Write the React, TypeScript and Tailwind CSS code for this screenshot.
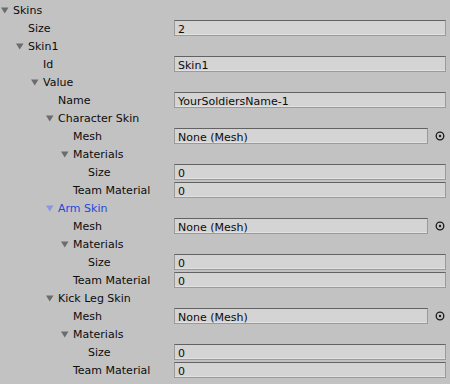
import React from "react";

type Row = {
  label: string;
  level: number;
  fold?: boolean;
  value?: string;
  obj?: boolean;
  blue?: boolean;
};

const rows: Row[] = [
  { label: "Skins", level: 0, fold: true },
  { label: "Size", level: 1, value: "2" },
  { label: "Skin1", level: 1, fold: true },
  { label: "Id", level: 2, value: "Skin1" },
  { label: "Value", level: 2, fold: true },
  { label: "Name", level: 3, value: "YourSoldiersName-1" },
  { label: "Character Skin", level: 3, fold: true },
  { label: "Mesh", level: 4, value: "None (Mesh)", obj: true },
  { label: "Materials", level: 4, fold: true },
  { label: "Size", level: 5, value: "0" },
  { label: "Team Material", level: 4, value: "0" },
  { label: "Arm Skin", level: 3, fold: true, blue: true },
  { label: "Mesh", level: 4, value: "None (Mesh)", obj: true },
  { label: "Materials", level: 4, fold: true },
  { label: "Size", level: 5, value: "0" },
  { label: "Team Material", level: 4, value: "0" },
  { label: "Kick Leg Skin", level: 3, fold: true },
  { label: "Mesh", level: 4, value: "None (Mesh)", obj: true },
  { label: "Materials", level: 4, fold: true },
  { label: "Size", level: 5, value: "0" },
  { label: "Team Material", level: 4, value: "0" },
  { label: "Enabled", level: 1, fold: true },
];

const indent = ["pl-[1px]", "pl-[16px]", "pl-[31px]", "pl-[46px]", "pl-[61px]", "pl-[76px]"];

const Triangle = ({ blue }: { blue?: boolean }) => (
  <svg width="8" height="7" viewBox="0 0 8 7" className="block">
    <path d="M0 0.5 H7.5 L3.75 6.5 Z" fill={blue ? "#8797e0" : "#6c6c6c"} />
  </svg>
);

const Picker = () => (
  <svg width="10" height="10" viewBox="0 0 10 10" className="block">
    <circle cx="5" cy="5" r="3.8" fill="none" stroke="#1a1a1a" strokeWidth="1.3" />
    <circle cx="5" cy="5" r="1.2" fill="#1a1a1a" />
  </svg>
);

export default function App() {
  return (
    <div
      className="w-[450px] h-[384px] overflow-hidden bg-[#c2c2c2] pt-px text-[11px] text-[#0c0c0c]"
      style={{ fontFamily: '"DejaVu Sans", Verdana, sans-serif' }}
    >
      {rows.map((r, i) => (
        <div key={i} className="flex items-center h-[18px]">
          <div className={`flex items-center w-[174px] shrink-0 whitespace-nowrap overflow-hidden ${indent[r.level]}`}>
            <span className="w-[12px] shrink-0 flex items-center">{r.fold && <Triangle blue={r.blue} />}</span>
            <span className={`translate-y-px ${r.blue ? "text-[#2149dc]" : ""}`}>{r.label}</span>
          </div>
          {r.value !== undefined && (
            <>
              <div
                className={`h-[16px] flex-1 flex items-center pl-[3px] bg-[#d4d4d4] border border-[#9a9a9a] border-t-[#626262] shadow-[inset_0_-1px_0_#e2e2e2] leading-none ${r.obj ? "" : "mr-[4px]"}`}
              >
                <span className="translate-y-px">{r.value}</span>
              </div>
              {r.obj && (
                <div className="w-[22px] shrink-0 flex justify-center pl-[1px]">
                  <Picker />
                </div>
              )}
            </>
          )}
        </div>
      ))}
    </div>
  );
}
